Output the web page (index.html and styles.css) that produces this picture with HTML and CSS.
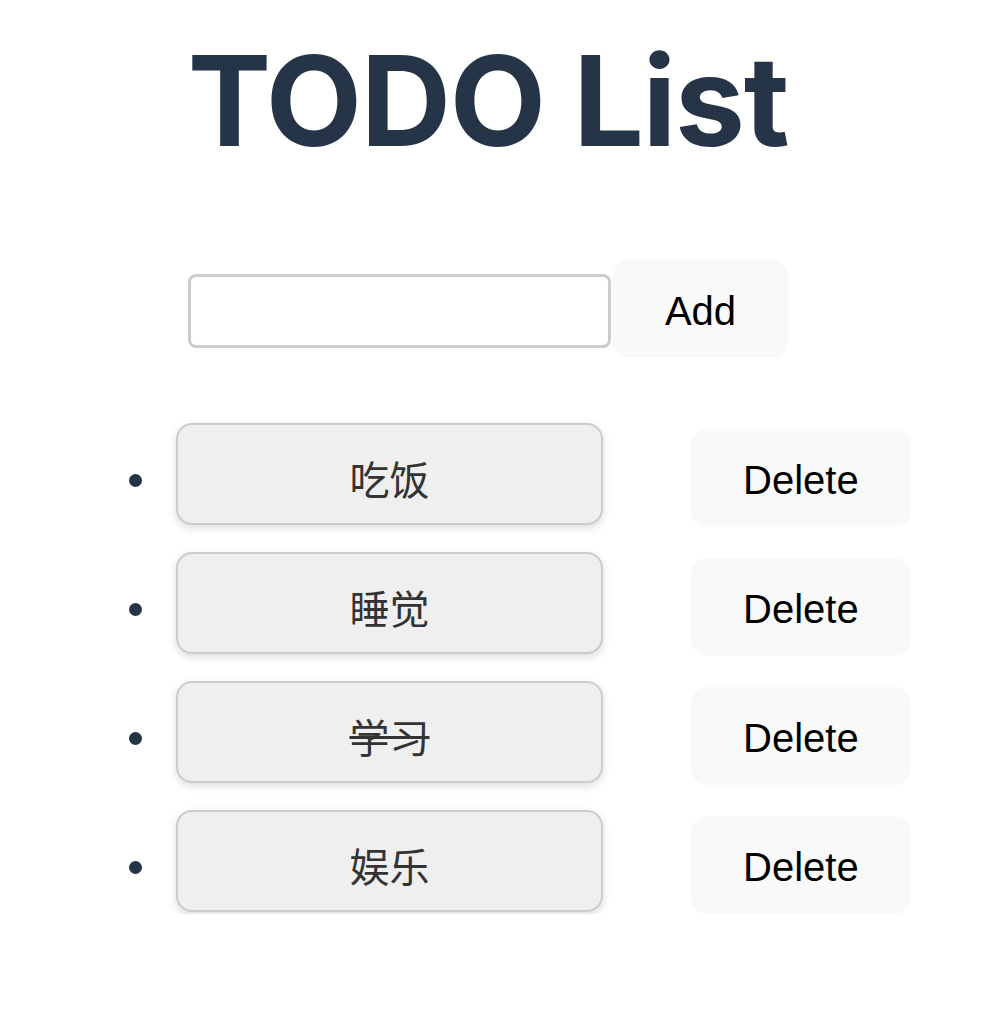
FILE: index.html
```html
<!DOCTYPE html>
<html lang="zh">
<head>
<meta charset="utf-8">
<title>TODO List</title>
<link rel="stylesheet" href="styles.css">
</head>
<body>
<div class="app">
  <h1 class="title">TODO List</h1>
  <div class="add-row">
    <input class="add-input" type="text">
    <button class="btn">Add</button>
  </div>
  <ul class="todo-list">
    <li class="todo-item">
      <span class="dot"></span>
      <div class="todo-text">吃饭</div>
      <button class="btn btn-delete">Delete</button>
    </li>
    <li class="todo-item">
      <span class="dot"></span>
      <div class="todo-text">睡觉</div>
      <button class="btn btn-delete">Delete</button>
    </li>
    <li class="todo-item">
      <span class="dot"></span>
      <div class="todo-text done">学习</div>
      <button class="btn btn-delete">Delete</button>
    </li>
    <li class="todo-item">
      <span class="dot"></span>
      <div class="todo-text">娱乐</div>
      <button class="btn btn-delete">Delete</button>
    </li>
  </ul>
</div>
</body>
</html>
```

FILE: styles.css
```css
html, body {
  margin: 0;
  padding: 0;
  background: #ffffff;
}

.app {
  width: 976px;
  text-align: center;
  font-family: "Liberation Sans", Arial, sans-serif;
  color: #253547;
}

.title {
  margin: 32px 0 0;
  font-family: Inter, "Liberation Sans", sans-serif;
  font-weight: 700;
  font-size: 125px;
  line-height: 137.5px;
  letter-spacing: -1.3px;
  color: #253547;
}

.add-row {
  margin-top: 90px;
  display: flex;
  justify-content: center;
  align-items: center;
  gap: 2px;
}

.add-input {
  box-sizing: border-box;
  width: 423px;
  height: 74px;
  margin-top: 4px;
  border: 3px solid #cccccc;
  border-radius: 8px;
  background: #ffffff;
  padding: 0 12px;
  font-size: 32px;
  outline: none;
}

.btn {
  box-sizing: border-box;
  border: 2px solid transparent;
  border-radius: 16px;
  background: #f9f9f9;
  padding: 26px 50px 22px;
  font-family: "Liberation Sans", Arial, sans-serif;
  font-size: 40px;
  line-height: 46px;
  color: #000000;
  cursor: pointer;
}

.todo-list {
  list-style: none;
  margin: 65px 0 0;
  padding: 0 0 0 129px;
  display: flex;
  flex-direction: column;
  gap: 25px;
}

.todo-item {
  display: flex;
  align-items: flex-start;
}

.dot {
  width: 13px;
  height: 13px;
  border-radius: 50%;
  background: #253547;
  margin-top: 51px;
  margin-right: 34px;
  flex: none;
}

.todo-text {
  box-sizing: border-box;
  width: 427px;
  height: 102px;
  border: 2px solid #cccccc;
  border-radius: 16px;
  background: #efefef;
  box-shadow: 0 3px 8px rgba(0, 0, 0, 0.14);
  padding-top: 30px;
  font-family: "Noto Sans CJK SC", sans-serif;
  font-size: 40px;
  line-height: 46px;
  color: #333333;
  text-align: center;
  flex: none;
}

.todo-text.done {
  text-decoration: line-through;
  text-decoration-thickness: 3px;
}

.btn-delete {
  margin-left: 88px;
  margin-top: 6px;
  flex: none;
}
```
